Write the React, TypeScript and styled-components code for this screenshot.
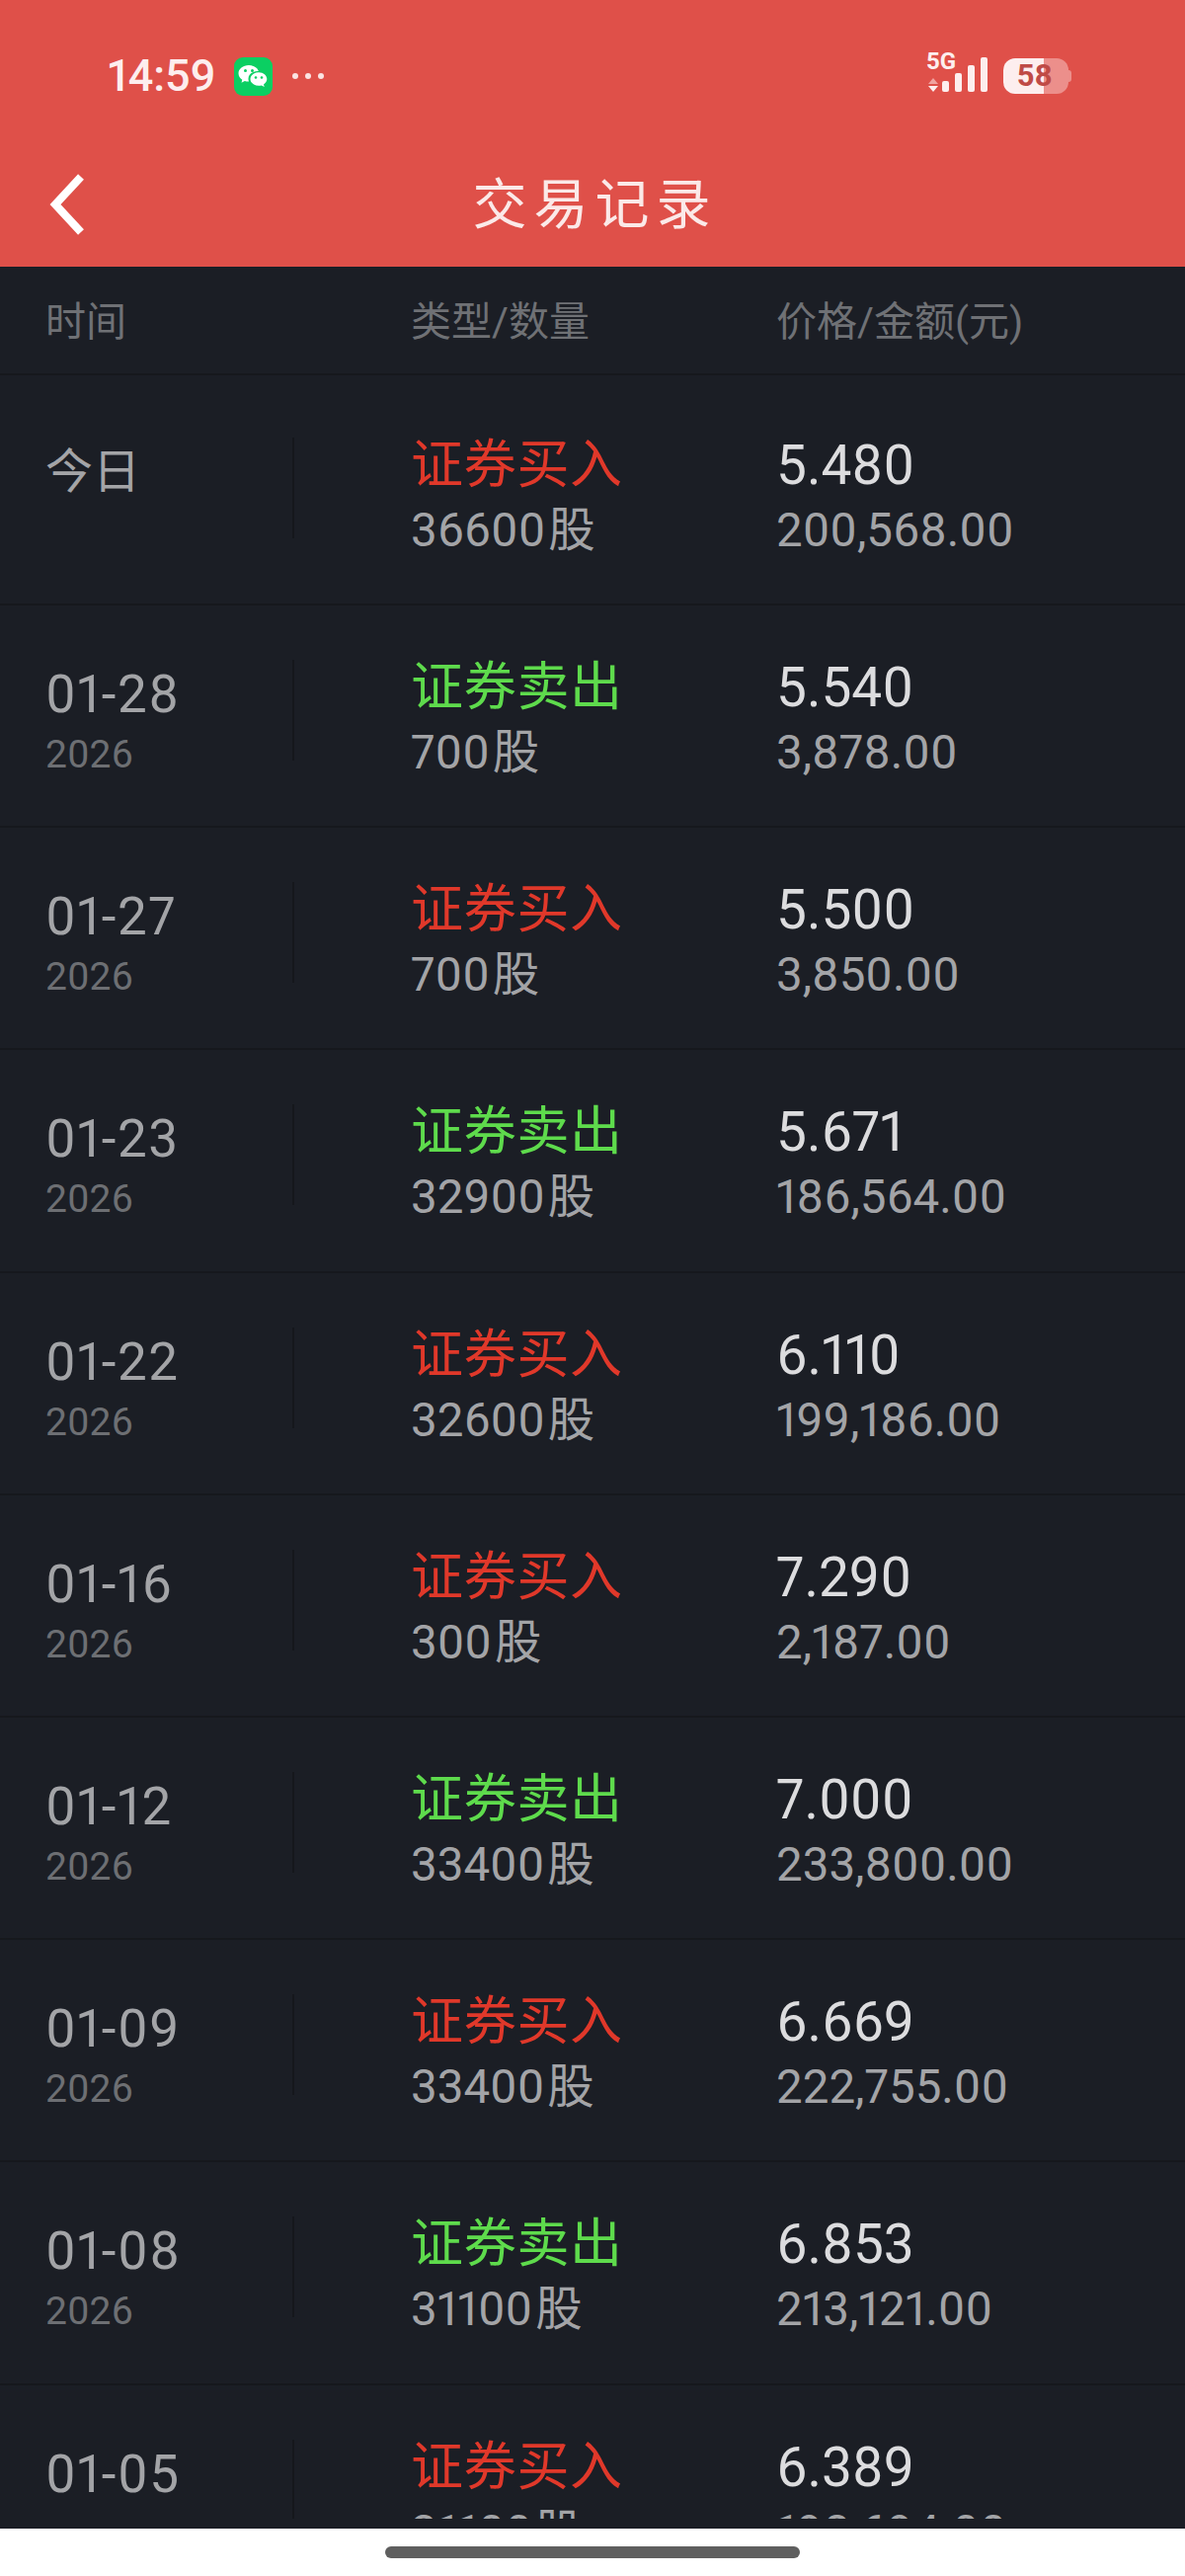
import styled, { createGlobalStyle } from 'styled-components'

const GlobalStyle = createGlobalStyle`
  html, body {
    margin: 0;
    padding: 0;
    background: #ffffff;
  }
  body {
    font-family: Roboto, 'Noto Sans CJK SC', sans-serif;
    font-feature-settings: 'pnum' 1;
    font-variant-numeric: proportional-nums;
  }
`

type Trade = {
  date: string
  year?: string
  side: 'buy' | 'sell'
  qty: string
  price: string
  amount: string
}

const trades: Trade[] = [
  { date: '今日', side: 'buy', qty: '36600', price: '5.480', amount: '200,568.00' },
  { date: '01-28', year: '2026', side: 'sell', qty: '700', price: '5.540', amount: '3,878.00' },
  { date: '01-27', year: '2026', side: 'buy', qty: '700', price: '5.500', amount: '3,850.00' },
  { date: '01-23', year: '2026', side: 'sell', qty: '32900', price: '5.671', amount: '186,564.00' },
  { date: '01-22', year: '2026', side: 'buy', qty: '32600', price: '6.110', amount: '199,186.00' },
  { date: '01-16', year: '2026', side: 'buy', qty: '300', price: '7.290', amount: '2,187.00' },
  { date: '01-12', year: '2026', side: 'sell', qty: '33400', price: '7.000', amount: '233,800.00' },
  { date: '01-09', year: '2026', side: 'buy', qty: '33400', price: '6.669', amount: '222,755.00' },
  { date: '01-08', year: '2026', side: 'sell', qty: '31100', price: '6.853', amount: '213,121.00' },
  { date: '01-05', year: '2026', side: 'buy', qty: '31100', price: '6.389', amount: '198,694.00' },
]

function WeChatIcon() {
  return (
    <svg width='39' height='39' viewBox='0 0 39 39'>
      <rect width='39' height='39' rx='9' fill='#0bcf62' />
      <path d='M15 8c-6 0-10.500 3.700-10.500 8.300 0 2.700 1.500 5 3.800 6.500l-.8 3 3.400-1.800c1.300.4 2.700.6 4.100.5-.4-1-.5-2-.5-2.800 0-4.400 4.200-7.800 9.400-7.800h.9C23.700 10.200 19.800 8 15 8z' fill='#ffffff' />
      <path d='M25 15.200c-4.800 0-8.500 3-8.500 6.800s3.700 6.800 8.500 6.800c1 0 2-.1 2.900-.4l2.800 1.500-.7-2.500c2-1.300 3.300-3.200 3.300-5.400 0-3.800-3.500-6.800-8.300-6.800z' fill='#ffffff' />
      <circle cx='11.500' cy='13.500' r='1.500' fill='#0bcf62' />
      <circle cx='18.500' cy='13.500' r='1.500' fill='#0bcf62' />
      <circle cx='22' cy='20.500' r='1.300' fill='#0bcf62' />
      <circle cx='28' cy='20.500' r='1.300' fill='#0bcf62' />
    </svg>
  )
}

function SignalIcon() {
  return (
    <svg width='64' height='40' viewBox='0 0 64 40'>
      <path d='M6 25l5 6H1z' fill='#f0a3a0' />
      <path d='M6 39l5-6H1z' fill='#fdeeee' />
      <rect x='15' y='28' width='7' height='11' rx='2' fill='#fdeeee' />
      <rect x='28' y='20' width='7' height='19' rx='2' fill='#fdeeee' />
      <rect x='41' y='12' width='7' height='27' rx='2' fill='#fdeeee' />
      <rect x='54' y='4' width='7' height='35' rx='2' fill='#fdeeee' />
    </svg>
  )
}

export default function App() {
  return (
    <>
      <GlobalStyle />
      <Page>
        <TopBar>
          <StatusBar>
            <StatusLeft>
              <Clock>14:59</Clock>
              <WeChatIcon />
              <MoreDots>
                <Dot />
                <Dot />
                <Dot />
              </MoreDots>
            </StatusLeft>
            <StatusRight>
              <Network>
                <FiveG>5G</FiveG>
                <SignalIcon />
              </Network>
              <Battery>
                <BatteryBody>
                  <BatteryLevel>58</BatteryLevel>
                </BatteryBody>
                <BatteryNub />
              </Battery>
            </StatusRight>
          </StatusBar>
          <NavBar>
            <BackIcon width='38' height='64' viewBox='0 0 38 64'>
              <path d='M33 4L7 32l26 28' fill='none' stroke='#ffffff' strokeWidth='8' />
            </BackIcon>
            <Title>交易记录</Title>
          </NavBar>
        </TopBar>
        <TableHead>
          <HeadDate>时间</HeadDate>
          <HeadType>类型/数量</HeadType>
          <HeadCell>价格/金额(元)</HeadCell>
        </TableHead>
        <List>
          {trades.map((t, i) => (
            <Row key={t.date} $first={i === 0}>
              <DateCell>
                <DateText $today={!t.year}>{t.date}</DateText>
                {t.year && <YearText>{t.year}</YearText>}
              </DateCell>
              <Divider />
              <TypeCell>
                <SideText $side={t.side}>{t.side === 'buy' ? '证券买入' : '证券卖出'}</SideText>
                <SubText>
                  {t.qty}
                  <Unit>股</Unit>
                </SubText>
              </TypeCell>
              <PriceCell>
                <PriceText>{t.price}</PriceText>
                <SubText>{t.amount}</SubText>
              </PriceCell>
            </Row>
          ))}
        </List>
        <ListFoot />
        <HomeArea>
          <HomeBar />
        </HomeArea>
      </Page>
    </>
  )
}

const Page = styled.div`
  width: 1200px;
  height: 2608px;
  display: flex;
  flex-direction: column;
  overflow: hidden;
  background: #ffffff;
`

const TopBar = styled.header`
  height: 270px;
  flex: none;
  background: #df5049;
  display: flex;
  flex-direction: column;
`

const StatusBar = styled.div`
  height: 150px;
  padding: 54px 115px 0 109px;
  box-sizing: border-box;
  display: flex;
  justify-content: space-between;
  align-items: flex-start;
`

const StatusLeft = styled.div`
  display: flex;
  align-items: center;
  height: 46px;
`

const Clock = styled.span`
  font-size: 45px;
  font-weight: 500;
  line-height: 46px;
  color: #fdeeee;
  margin-right: 18px;
`

const MoreDots = styled.div`
  display: flex;
  gap: 7px;
  margin-left: 20px;
`

const Dot = styled.span`
  width: 6px;
  height: 6px;
  border-radius: 50%;
  background: #fbe3e2;
`

const StatusRight = styled.div`
  display: flex;
  align-items: flex-start;
  gap: 15px;
`

const Network = styled.div`
  position: relative;
  width: 62px;
  height: 41px;
`

const FiveG = styled.span`
  position: absolute;
  left: -1px;
  top: -4px;
  font-size: 24px;
  font-weight: 700;
  line-height: 24px;
  color: #fdeeee;
`

const Battery = styled.div`
  display: flex;
  align-items: center;
  margin-top: 5px;
`

const BatteryBody = styled.div`
  width: 66px;
  height: 36px;
  border-radius: 12px;
  background: linear-gradient(90deg, #fdeeee 0 41px, #ec8f8b 41px 100%);
  display: flex;
  align-items: center;
  justify-content: flex-end;
  padding-right: 16px;
  box-sizing: border-box;
`

const BatteryLevel = styled.span`
  font-size: 31px;
  font-weight: 700;
  line-height: 36px;
  color: #bf4a46;
`

const BatteryNub = styled.span`
  width: 3px;
  height: 12px;
  border-radius: 0 3px 3px 0;
  background: #ec8f8b;
`

const NavBar = styled.nav`
  position: relative;
  flex: 1;
  display: flex;
  align-items: center;
  justify-content: center;
`

const BackIcon = styled.svg`
  position: absolute;
  left: 49px;
  top: 25px;
`

const Title = styled.h1`
  margin: 0 0 6px 5px;
  font-size: 55px;
  font-weight: 400;
  line-height: 64px;
  letter-spacing: 7px;
  color: #fbe9e8;
`

const TableHead = styled.div`
  height: 110px;
  flex: none;
  box-sizing: border-box;
  padding: 0 0 4px 46px;
  display: flex;
  align-items: center;
  background: #1b1e25;
  border-bottom: 2px solid #16181d;
  font-size: 41px;
  color: #6f7175;
`

const HeadCell = styled.span`
  display: block;
`

const HeadDate = styled(HeadCell)`
  width: 370px;
`

const HeadType = styled(HeadCell)`
  width: 370px;
`

const List = styled.div`
  height: 2170px;
  flex: none;
  overflow: hidden;
  background: #1b1e25;
`

const Row = styled.div<{ $first: boolean }>`
  height: ${(p) => (p.$first ? 233 : 225.2)}px;
  box-sizing: border-box;
  padding: ${(p) => (p.$first ? 61 : 53)}px 0 0 46px;
  display: flex;
  align-items: flex-start;
  border-bottom: 2px solid #16181d;
`

const DateCell = styled.div`
  width: 250px;
  padding-top: 7px;
  flex: none;
`

const DateText = styled.div<{ $today: boolean }>`
  font-size: ${(p) => (p.$today ? 48 : 53)}px;
  letter-spacing: ${(p) => (p.$today ? 0 : 1.5)}px;
  line-height: 60px;
  color: #a3a4a7;
`

const YearText = styled.div`
  margin-top: 8px;
  font-size: 39px;
  line-height: 46px;
  color: #6d6f73;
`

const Divider = styled.span`
  width: 2px;
  height: 102px;
  margin: 2px 118px 0 0;
  flex: none;
  background: #15171c;
`

const TypeCell = styled.div`
  width: 370px;
  flex: none;
`

const PriceCell = styled.div`
  flex: 1;
`

const SideText = styled.div<{ $side: 'buy' | 'sell' }>`
  font-size: 53px;
  line-height: 60px;
  letter-spacing: 0.7px;
  color: ${(p) => (p.$side === 'buy' ? '#e0382a' : '#5edb4c')};
`

const PriceText = styled.div`
  font-size: 55px;
  line-height: 60px;
  color: #dcdcde;
`

const SubText = styled.div`
  margin-top: 10px;
  font-size: 47.500px;
  line-height: 52px;
  color: #a3a4a7;
`

const Unit = styled.span`
  margin-left: 3px;
`

const ListFoot = styled.div`
  height: 10px;
  flex: none;
  background: #1b1e25;
`

const HomeArea = styled.div`
  flex: 1;
  display: flex;
  justify-content: center;
  padding-top: 18px;
  background: #ffffff;
`

const HomeBar = styled.div`
  width: 420px;
  height: 12px;
  border-radius: 6px;
  background: #5f5f5f;
`
